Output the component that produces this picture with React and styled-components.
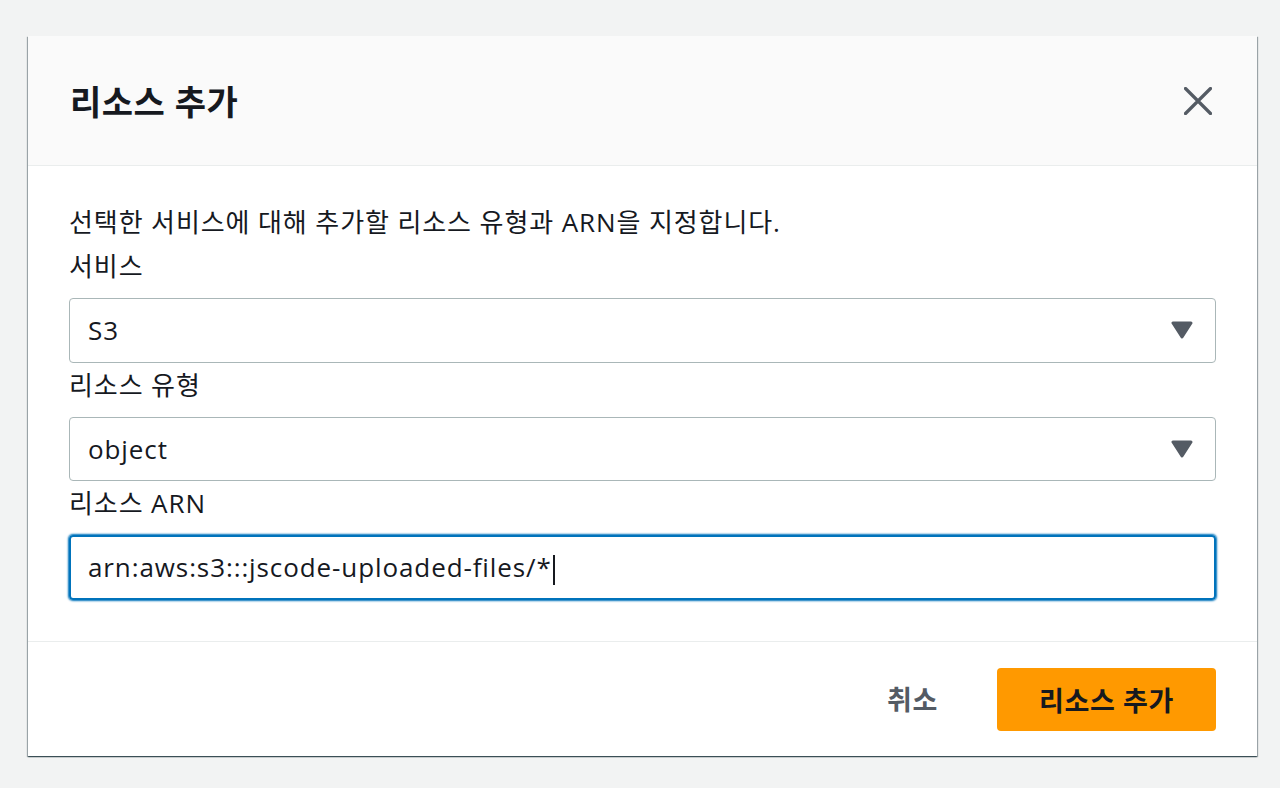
import React from 'react'
import styled, { createGlobalStyle } from 'styled-components'

const Global = createGlobalStyle`
    html, body {
        margin:0;
        padding:0;
        background:#f2f3f3;
        font-family:"Open Sans", "Noto Sans CJK KR", sans-serif;
        color:#16191f;
    }
`

const Page = styled.div`
    box-sizing:border-box;
    width:1280px;
    height:788px;
    padding:36px 23px 32px 28px;
`

const Modal = styled.div`
    width:1229px;
    height:720px;
    background:#fff;
    display:flex;
    flex-direction:column;
    box-shadow:0 1px 1px 0 rgba(0,28,36,0.5), 1px 1px 1px 0 rgba(0,28,36,0.3), -1px 1px 1px 0 rgba(0,28,36,0.3);
`

const Header = styled.div`
    height:130px;
    box-sizing:border-box;
    background:#fafafa;
    border-bottom:1px solid #eaeded;
    display:flex;
    align-items:center;
    justify-content:space-between;
    padding:0 42px 0 42px;
`

const Title = styled.h2`
    margin:0;
    font-size:34px;
    font-weight:700;
    letter-spacing:0.5px;
`

const Close = styled.button`
    border:none;
    background:transparent;
    padding:0;
    width:36px;
    height:36px;
    display:flex;
    align-items:center;
    justify-content:center;
    cursor:pointer;
    margin-right:-1px;
`

const Body = styled.div`
    padding:38px 41px 41px 41px;
    border-bottom:1px solid #eaeded;
`

const Desc = styled.p`
    margin:0 0 4px 0;
    font-size:26px;
    line-height:36px;
    letter-spacing:0.9px;
`

const Label = styled.label`
    display:block;
    font-size:26px;
    line-height:36px;
    letter-spacing:0.9px;
    padding:4px 0 14px 0;
`

const Box = styled.div`
    box-sizing:border-box;
    height:64.5px;
    display:flex;
    align-items:center;
    justify-content:space-between;
    font-size:26px;
    letter-spacing:0.9px;
    border-radius:4px;
    border:${p => p.focused ? '2px solid #0073bb' : '1px solid #aab7b8'};
    padding:0 ${p => p.focused ? '21px' : '22px'} 0 ${p => p.focused ? '17px' : '18px'};
    box-shadow:${p => p.focused ? '0 0 2px 1px #0073bb' : 'none'};
`

const Caret = styled.span`
    display:inline-block;
    width:2px;
    height:30px;
    background:#16191f;
    vertical-align:middle;
    margin-left:1px;
`

const Footer = styled.div`
    flex:1;
    display:flex;
    align-items:center;
    justify-content:flex-end;
    gap:39px;
    padding:0 41px 0 41px;
`

const LinkButton = styled.button`
    border:none;
    background:transparent;
    font-family:inherit;
    font-size:27px;
    font-weight:700;
    letter-spacing:0.6px;
    color:#545b64;
    padding:0 20px;
    height:63px;
`

const Primary = styled.button`
    border:none;
    border-radius:4px;
    background:#ff9900;
    color:#16191f;
    font-family:inherit;
    font-size:27px;
    font-weight:700;
    letter-spacing:0.6px;
    width:219px;
    height:63px;
    margin-top:2px;
`

const Arrow = () => (
    <svg width="22" height="18" viewBox="0 0 22 18">
        <path d="M2 2 L20 2 L11 16 Z" fill="#545b64" stroke="#545b64" strokeWidth="3" strokeLinejoin="round" />
    </svg>
)

const Select = ({ value }) => (
    <Box>
        <span>{value}</span>
        <Arrow />
    </Box>
)

const App = () => (
    <Page>
        <Global />
        <Modal>
            <Header>
                <Title>리소스 추가</Title>
                <Close aria-label="닫기">
                    <svg width="28" height="28" viewBox="0 0 28 28">
                        <path d="M1.5 1.5 L26.5 26.5 M26.5 1.5 L1.5 26.5" stroke="#545b64" strokeWidth="3.2" strokeLinecap="round" />
                    </svg>
                </Close>
            </Header>
            <Body>
                <Desc>선택한 서비스에 대해 추가할 리소스 유형과 ARN을 지정합니다.</Desc>
                <Label>서비스</Label>
                <Select value="S3" />
                <Label>리소스 유형</Label>
                <Select value="object" />
                <Label>리소스 ARN</Label>
                <Box focused>
                    <span>arn:aws:s3:::jscode-uploaded-files/*<Caret /></span>
                </Box>
            </Body>
            <Footer>
                <LinkButton>취소</LinkButton>
                <Primary>리소스 추가</Primary>
            </Footer>
        </Modal>
    </Page>
)

export default App
